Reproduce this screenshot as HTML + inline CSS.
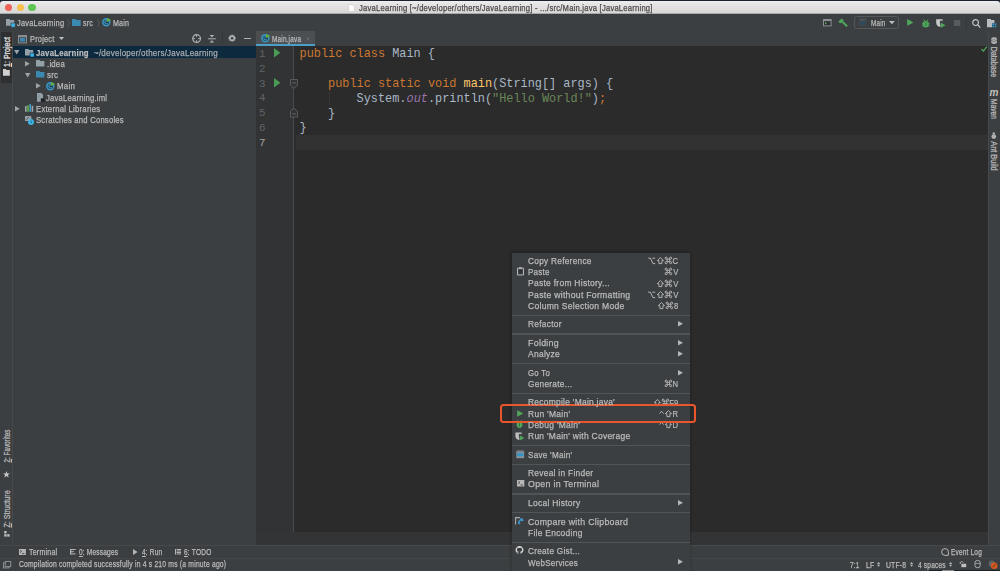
<!DOCTYPE html>
<html><head><meta charset="utf-8">
<style>
*{box-sizing:border-box;margin:0;padding:0}
html,body{width:1000px;height:571px;overflow:hidden;background:#3c3f41;font-family:"Liberation Sans",sans-serif;color:#bbbbbb;position:relative}
.a{position:absolute}
.t{position:absolute;white-space:pre;transform-origin:0 50%;font-family:"Liberation Sans",sans-serif;-webkit-text-stroke:0.25px currentColor}
.t u{text-decoration:underline;text-underline-offset:1px}
svg{position:absolute;overflow:visible}
.code{position:absolute;white-space:pre;font-family:"Liberation Mono",monospace;font-size:11.88px;line-height:14.85px;color:#a9b7c6}
.kw{color:#cc7832}.fn{color:#ffc66d}.st{color:#6a8759}.sf{color:#9876aa;font-style:italic}
.ln{position:absolute;font-family:"Liberation Mono",monospace;font-size:10.8px;line-height:14.85px;color:#676a6d}
</style></head><body>
<!-- window chrome -->
<div class="a" style="left:0;top:0;width:1000px;height:1.5px;background:#202430"></div>
<div class="a" style="left:0;top:0;width:1000px;height:4px;background:#1b2030"></div>
<div class="a" style="left:0;top:1.3px;width:1000px;height:12.7px;background:linear-gradient(#efefef,#e6e6e6 20%,#d6d6d6);border-radius:3px 3px 0 0"></div>
<div class="a" style="left:0;top:13px;width:1000px;height:1px;background:#a9a9a9"></div>
<div class="a" style="left:4.5px;top:3.9px;width:7.4px;height:7.4px;border-radius:50%;background:#ef6358"></div>
<div class="a" style="left:16.5px;top:3.9px;width:7.4px;height:7.4px;border-radius:50%;background:#f6bf4e"></div>
<div class="a" style="left:28.3px;top:3.9px;width:7.4px;height:7.4px;border-radius:50%;background:#5ec552"></div>
<svg style="left:348px;top:4px" width="7" height="8" viewBox="0 0 7 8"><path d="M0.5 0.5H4.5L6.5 2.5V7.5H0.5Z" fill="#fbfbfb" stroke="#c8c8c8" stroke-width="0.6"/></svg>

<!-- nav bar -->
<div class="a" style="left:0;top:14px;width:1000px;height:17px;background:#3c3f41"></div>
<div class="a" style="left:0;top:30.5px;width:1000px;height:1px;background:#303234"></div>

<!-- left stripe -->
<div class="a" style="left:0;top:31px;width:12px;height:514px;background:#3c3f41"></div>
<div class="a" style="left:1px;top:31.5px;width:10.5px;height:51.5px;background:#2d2f30"></div>
<div class="a" style="left:12px;top:31px;width:1px;height:514px;background:#46484a"></div>

<!-- project panel -->
<div class="a" style="left:13px;top:31px;width:243px;height:514px;background:#3c3f41"></div>
<div class="a" style="left:12.5px;top:46px;width:243.5px;height:11.8px;background:#0d293e"></div>

<!-- editor -->
<div class="a" style="left:256px;top:31px;width:732px;height:15px;background:#3c3f41"></div>
<div class="a" style="left:256px;top:31px;width:58.5px;height:15px;background:#4b4f52"></div>
<div class="a" style="left:256px;top:43.7px;width:58.5px;height:2.2px;background:#4a9fc8"></div>
<div class="a" style="left:256px;top:46px;width:732px;height:499px;background:#2b2b2b"></div>
<div class="a" style="left:256px;top:46px;width:37px;height:499px;background:#313335"></div>
<div class="a" style="left:293.2px;top:46px;width:1px;height:499px;background:#484a4c"></div>
<div class="a" style="left:295.5px;top:135px;width:692.5px;height:14.5px;background:#323232"></div>

<div class="a" style="left:256px;top:532px;width:732px;height:13px;background:#323436"></div>
<!-- right stripe -->
<div class="a" style="left:988px;top:31px;width:12px;height:514px;background:#3c3f41"></div>
<div class="a" style="left:987.6px;top:31px;width:1px;height:514px;background:#46494b"></div>


<!-- bottom stripe + status -->
<div class="a" style="left:0;top:545px;width:1000px;height:1px;background:#46484a"></div>
<div class="a" style="left:0;top:546px;width:1000px;height:12px;background:#3c3f41"></div>
<div class="a" style="left:0;top:558px;width:1000px;height:1px;background:#444648"></div>
<div class="a" style="left:0;top:559px;width:1000px;height:12px;background:#3c3f41"></div>

<!-- code -->
<div class="code" style="left:299.6px;top:47.2px"><span class="kw">public class </span>Main {

    <span class="kw">public static void </span><span class="fn">main</span>(String[] args) {
        System.<span class="sf">out</span>.println(<span class="st">"Hello World!"</span>)<span class="kw">;</span>
    }
}
</div>

<svg style="left:5.8px;top:19px" width="8.2" height="6.8" viewBox="0 0 8.2 6.8"><path d="M0 0H3.44L4.26 1.1H8.2 V6.8H0Z" fill="#93a0a8"/></svg>
<svg style="left:11px;top:23.4px" width="4.2" height="4.2" viewBox="0 0 4.2 4.2"><rect width="4.2" height="4.2" fill="#3cb4e6" stroke="#3c3f41" stroke-width="0.6"/></svg>
<svg style="left:66.8px;top:18.5px" width="3" height="8.5" viewBox="0 0 3 8.5"><path d="M0.5 0.3L2.5 4.25L0.5 8.2" fill="none" stroke="#5a5d5f" stroke-width="0.8"/></svg>
<svg style="left:72.3px;top:18.8px" width="8.7" height="6.9" viewBox="0 0 8.7 6.9"><path d="M0 0H3.65L4.52 1.1H8.7 V6.9H0Z" fill="#3a89b0"/></svg>
<svg style="left:96.5px;top:18.5px" width="3" height="8.5" viewBox="0 0 3 8.5"><path d="M0.5 0.3L2.5 4.25L0.5 8.2" fill="none" stroke="#5a5d5f" stroke-width="0.8"/></svg>
<svg style="left:102px;top:18.2px" width="9.6" height="8.6" viewBox="0 0 9.6 8.6"><circle cx="4.3" cy="4.3" r="4.20" fill="#3b93c0"/><circle cx="4.3" cy="4.3" r="2.60" fill="#24404f"/><path d="M5.60 3.20A1.6 1.6 0 1 0 5.60 5.40" fill="none" stroke="#3b93c0" stroke-width="1.1"/><path d="M4.99 0L9.30 1.89L4.99 3.96Z" fill="#62b543"/></svg>
<svg style="left:822.9px;top:18.9px" width="8.6" height="7.4" viewBox="0 0 8.6 7.4"><rect x="0.5" y="0.5" width="7.6" height="6.4" fill="#2f3133" stroke="#8c8f91" stroke-width="1"/><rect x="0.5" y="0.5" width="7.6" height="1.6" fill="#8c8f91"/><path d="M2 3L4 4.3L2 5.6Z" fill="#4fa85a"/></svg>
<svg style="left:838.1px;top:18.3px" width="9.2" height="8.2" viewBox="0 0 9.2 8.2"><path d="M3.2 2.8L8.6 7.8" stroke="#4fa85a" stroke-width="1.9" stroke-linecap="round"/><path d="M0.4 3.6L3.8 0.4L5.6 2.2L2.2 5.4Z" fill="#4fa85a"/></svg>
<div class="a" style="left:854px;top:16px;width:44.8px;height:13.2px;border:1px solid #55585a;border-radius:2.5px;background:#3c3f41"></div>
<svg style="left:859.4px;top:18.1px" width="7.6" height="7.8" viewBox="0 0 7.6 7.8"><rect x="0" y="0" width="7.6" height="7.8" fill="#45484b"/><rect x="0.8" y="1.2" width="6" height="1.2" fill="#55585b"/><rect x="0.8" y="3.4" width="6" height="3.4" fill="#2d4a5c"/></svg>
<svg style="left:889.3px;top:21.4px" width="5.8" height="3.2" viewBox="0 0 5.8 3.2"><path d="M0 0H5.8L2.9 3.2Z" fill="#c0c0c0"/></svg>
<svg style="left:907px;top:19.4px" width="6.6" height="6.8" viewBox="0 0 6.6 6.8"><path d="M0.2 0L6.4 3.4L0.2 6.8Z" fill="#4fa85a"/></svg>
<svg style="left:921.9px;top:18.5px" width="7.6" height="8.6" viewBox="0 0 7.6 8.6"><ellipse cx="3.8" cy="5.2" rx="3.1" ry="3.3" fill="#4fa85a"/><rect x="3.4" y="3.4" width="0.8" height="3.6" fill="#2f6b38"/><path d="M1.6 0.4L2.8 2.1M6 0.4L4.8 2.1M0 4.6H1M6.6 4.6H7.6M0 6.8H1M6.6 6.8H7.6" stroke="#4fa85a" stroke-width="0.9"/></svg>
<svg style="left:936.4px;top:18.5px" width="9.6" height="8.8" viewBox="0 0 9.6 8.8"><path d="M0.2 0.2H6.6V3.5Q6.6 6.8 3.4 7.8Q0.2 6.8 0.2 3.5Z" fill="#c9c9c9"/><path d="M3.9 1.8H6.8V5.6L4.7 7.4Q3.9 5.2 3.9 3.6Z" fill="#3c3f41"/><path d="M4.8 3.8L9.6 6.3L4.8 8.8Z" fill="#4fa85a"/></svg>
<svg style="left:953.5px;top:19.8px" width="6.3" height="6" viewBox="0 0 6.3 6"><rect width="6.3" height="6" fill="#595c5e"/></svg>
<div class="a" style="left:966px;top:16.5px;width:1px;height:12px;background:#333536"></div>
<svg style="left:971.8px;top:18.5px" width="8.6" height="9.2" viewBox="0 0 8.6 9.2"><circle cx="3.6" cy="3.6" r="2.9" fill="none" stroke="#c6c6c6" stroke-width="1.2"/><path d="M5.7 5.7L8.2 8.6" stroke="#c6c6c6" stroke-width="1.3"/></svg>
<svg style="left:987px;top:19.3px" width="9.4" height="8.4" viewBox="0 0 9.4 8.4"><path d="M0 0H3.6L4.4 1H7.4V4.2H5V8.2H0Z" fill="#b8bcbf"/><rect x="5.2" y="4.4" width="1.8" height="1.7" fill="#3592c4"/><rect x="7.5" y="4.4" width="1.8" height="1.7" fill="#3592c4"/><rect x="5.2" y="6.6" width="1.8" height="1.7" fill="#3592c4"/><rect x="7.5" y="6.6" width="1.8" height="1.7" fill="#3592c4"/></svg>
<svg style="left:2.9px;top:69px" width="6.8" height="6.8" viewBox="0 0 6.8 6.8"><path d="M0 0H2.8L3.4 1H6.8V6.8H0Z" fill="#d0d0d0"/></svg>
<svg style="left:3.2px;top:470.8px" width="7" height="6.6" viewBox="0 0 7 6.6"><path d="M3.5 0L4.35 2.45H7L4.9 4L5.7 6.6L3.5 5L1.3 6.6L2.1 4L0 2.45H2.65Z" fill="#c8c8c8"/></svg>
<svg style="left:3.8px;top:531.4px" width="5.6" height="5.8" viewBox="0 0 5.6 5.8"><rect x="0.2" y="0" width="2.4" height="2.4" fill="#c0c0c0"/><rect x="0.2" y="3.2" width="2.4" height="2.4" fill="#c0c0c0"/><rect x="3.2" y="3.2" width="2.4" height="2.4" fill="#c0c0c0"/></svg>
<svg style="left:18px;top:34.6px" width="9" height="8.4" viewBox="0 0 9 8.4"><rect x="0.5" y="0.5" width="8" height="7.4" fill="#3c3f41" stroke="#8a8e91" stroke-width="1"/><rect x="0.5" y="0.5" width="8" height="1.8" fill="#8a8e91"/><rect x="1.8" y="3" width="5.4" height="3.6" fill="#3b88b2"/></svg>
<svg style="left:58.8px;top:37.2px" width="5" height="3" viewBox="0 0 5 3"><path d="M0 0H5L2.5 3Z" fill="#c0c0c0"/></svg>
<svg style="left:191.9px;top:34px" width="9.2" height="9.2" viewBox="0 0 9.2 9.2"><circle cx="4.6" cy="4.6" r="3.9" fill="none" stroke="#afb1b3" stroke-width="1.2"/><path d="M4.6 1V3M4.6 6.2V8.2M1 4.6H3M6.2 4.6H8.2" stroke="#afb1b3" stroke-width="1"/></svg>
<svg style="left:208.1px;top:34.8px" width="7.8" height="7.6" viewBox="0 0 7.8 7.6"><path d="M1.6 0H6.2L3.9 2.4Z" fill="#afb1b3"/><rect x="0" y="3.3" width="7.8" height="1" fill="#afb1b3"/><path d="M1.6 7.6H6.2L3.9 5.2Z" fill="#afb1b3"/></svg>
<div class="a" style="left:221.6px;top:33px;width:1px;height:11px;background:#333536"></div>
<svg style="left:227.5px;top:34.4px" width="8.2" height="8.4" viewBox="0 0 8.2 8.4"><path d="M4.1 0.2L5 1.6L6.6 1.5L6.9 3.1L8.2 4.2L6.9 5.3L6.6 6.9L5 6.8L4.1 8.2L3.2 6.8L1.6 6.9L1.3 5.3L0 4.2L1.3 3.1L1.6 1.5L3.2 1.6Z" fill="#afb1b3"/><circle cx="4.1" cy="4.2" r="1.3" fill="#3c3f41"/></svg>
<div class="a" style="left:243.6px;top:38px;width:7.2px;height:1.1px;background:#afb1b3"></div>
<svg style="left:14.4px;top:50px" width="5.4" height="4.6" viewBox="0 0 5.4 4.6"><path d="M0 0H5.4L2.7 4.6Z" fill="#a0a2a4"/></svg>
<svg style="left:24.9px;top:48.8px" width="8.2" height="6.6" viewBox="0 0 8.2 6.6"><path d="M0 0H3.44L4.26 1.1H8.2 V6.6H0Z" fill="#93a0a8"/></svg>
<svg style="left:30.1px;top:53.2px" width="4.2" height="4" viewBox="0 0 4.2 4"><rect width="4.2" height="4" fill="#3cb4e6" stroke="#0d293e" stroke-width="0.6"/></svg>
<svg style="left:25.3px;top:60.9px" width="4.8" height="5.4" viewBox="0 0 4.8 5.4"><path d="M0 0L4.8 2.7L0 5.4Z" fill="#a0a2a4"/></svg>
<svg style="left:35.8px;top:60.1px" width="8.4" height="6.4" viewBox="0 0 8.4 6.4"><path d="M0 0H3.53L4.37 1.1H8.4 V6.4H0Z" fill="#93a0a8"/></svg>
<svg style="left:25.1px;top:72.6px" width="5.4" height="4.6" viewBox="0 0 5.4 4.6"><path d="M0 0H5.4L2.7 4.6Z" fill="#a0a2a4"/></svg>
<svg style="left:35.8px;top:71.4px" width="8.4" height="6.4" viewBox="0 0 8.4 6.4"><path d="M0 0H3.53L4.37 1.1H8.4 V6.4H0Z" fill="#3a89b0"/></svg>
<svg style="left:36.2px;top:83.4px" width="4.8" height="5.4" viewBox="0 0 4.8 5.4"><path d="M0 0L4.8 2.7L0 5.4Z" fill="#a0a2a4"/></svg>
<svg style="left:46.3px;top:81.8px" width="9.6" height="8.6" viewBox="0 0 9.6 8.6"><circle cx="4.3" cy="4.3" r="4.20" fill="#3b93c0"/><circle cx="4.3" cy="4.3" r="2.60" fill="#24404f"/><path d="M5.60 3.20A1.6 1.6 0 1 0 5.60 5.40" fill="none" stroke="#3b93c0" stroke-width="1.1"/><path d="M4.99 0L9.30 1.89L4.99 3.96Z" fill="#62b543"/></svg>
<svg style="left:37px;top:93.2px" width="7.6" height="9" viewBox="0 0 7.6 9"><path d="M0 0H4.2L6 1.8V8.8H0Z" fill="#93a0a8"/><path d="M2 2.2V4" stroke="#6e7a82" stroke-width="0.6"/><rect x="4" y="5.6" width="3.6" height="3.4" fill="#1c1c1c" stroke="#3c3f41" stroke-width="0.5"/></svg>
<svg style="left:15px;top:106.3px" width="4.8" height="5.4" viewBox="0 0 4.8 5.4"><path d="M0 0L4.8 2.7L0 5.4Z" fill="#a0a2a4"/></svg>
<svg style="left:25px;top:104.3px" width="8.6" height="7.8" viewBox="0 0 8.6 7.8"><rect x="0" y="2" width="1.6" height="5.8" fill="#9aa7b0"/><rect x="2.2" y="1.2" width="1.6" height="6.6" fill="#62b543"/><rect x="4.4" y="0" width="1.6" height="7.8" fill="#3d9ac9"/><rect x="6.6" y="1.8" width="1.6" height="6" fill="#9aa7b0"/></svg>
<svg style="left:25px;top:116px" width="9.2" height="9.2" viewBox="0 0 9.2 9.2"><path d="M0 0H5.6L6.4 0.8V5H0Z" fill="#93a0a8"/><path d="M1 4L4 1" stroke="#3c3f41" stroke-width="0.6"/><circle cx="6" cy="6" r="3" fill="#3cb4e6"/><path d="M6 4.6V6.2L7 7" stroke="#1b4f66" stroke-width="0.7" fill="none"/></svg>
<svg style="left:261.4px;top:34.4px" width="9.6" height="8.6" viewBox="0 0 9.6 8.6"><circle cx="4.3" cy="4.3" r="4.20" fill="#3b93c0"/><circle cx="4.3" cy="4.3" r="2.60" fill="#24404f"/><path d="M5.60 3.20A1.6 1.6 0 1 0 5.60 5.40" fill="none" stroke="#3b93c0" stroke-width="1.1"/><path d="M4.99 0L9.30 1.89L4.99 3.96Z" fill="#62b543"/></svg>
<svg style="left:305.8px;top:37px" width="3.9" height="3.9" viewBox="0 0 3.9 3.9"><path d="M0.2 0.2L3.7 3.7M3.7 0.2L0.2 3.7" stroke="#6d7072" stroke-width="0.8"/></svg>
<div class="ln" style="left:259px;top:47.00px;color:#606366">1</div>
<div class="ln" style="left:259px;top:61.83px;color:#606366">2</div>
<div class="ln" style="left:259px;top:76.66px;color:#606366">3</div>
<div class="ln" style="left:259px;top:91.49px;color:#606366">4</div>
<div class="ln" style="left:259px;top:106.32px;color:#606366">5</div>
<div class="ln" style="left:259px;top:121.15px;color:#606366">6</div>
<div class="ln" style="left:259px;top:135.98px;color:#a4a3a3">7</div>
<svg style="left:273.7px;top:48.400000000000006px" width="6.4" height="9.6" viewBox="0 0 6.4 9.6"><path d="M0 0L6.4 4.8L0 9.6Z" fill="#499c54"/></svg>
<svg style="left:273.7px;top:78.2px" width="6.4" height="9.6" viewBox="0 0 6.4 9.6"><path d="M0 0L6.4 4.8L0 9.6Z" fill="#499c54"/></svg>
<svg style="left:289.9px;top:79.4px" width="8" height="9.8" viewBox="0 0 8 9.8"><path d="M0.5 0.5H7.5V6.4L4 9.3L0.5 6.4Z" fill="#313335" stroke="#595b5d" stroke-width="1"/><path d="M2.3 3.9H5.7" stroke="#6e7072" stroke-width="0.9"/></svg>
<svg style="left:289.9px;top:108.4px" width="8" height="9.6" viewBox="0 0 8 9.6"><path d="M0.5 9.1H7.5V3.2L4 0.3L0.5 3.2Z" fill="#313335" stroke="#595b5d" stroke-width="1"/><path d="M2.3 5.9H5.7" stroke="#6e7072" stroke-width="0.9"/></svg>
<div class="a" style="left:328.6px;top:91px;width:1px;height:14px;background:#373737"></div>
<svg style="left:980.6px;top:46.4px" width="6.2" height="5.8" viewBox="0 0 6.2 5.8"><path d="M0.5 3L2.4 5L5.8 0.6" fill="none" stroke="#4fa85a" stroke-width="1.2"/></svg>
<svg style="left:990.8px;top:37.2px" width="6.2" height="7.4" viewBox="0 0 6.2 7.4"><ellipse cx="3.1" cy="1.3" rx="2.8" ry="1.1" fill="#b0b0b0"/><path d="M0.3 1.6V6.1Q3.1 7.8 5.9 6.1V1.6Q3.1 3.3 0.3 1.6Z" fill="#b0b0b0"/><path d="M0.3 3.6Q3.1 5.3 5.9 3.6" stroke="#3c3f41" stroke-width="0.5" fill="none"/></svg>
<div class="t" style="left:989.5px;top:88.5px;font:italic bold 10px 'Liberation Sans',sans-serif;color:#c0c0c0;line-height:8px;-webkit-text-stroke:0">m</div>
<svg style="left:991.2px;top:131.6px" width="5.6" height="7" viewBox="0 0 5.6 7"><ellipse cx="2.8" cy="4.6" rx="2.4" ry="2.4" fill="#b0b0b0"/><circle cx="2.8" cy="1.4" r="1.2" fill="#b0b0b0"/></svg>
<svg style="left:18.9px;top:548.9px" width="6.9" height="6" viewBox="0 0 6.9 6"><rect width="6.9" height="6" fill="#b5b5b5"/><path d="M1 1.2L2.6 2.4L1 3.6M3 4.6H5.4" stroke="#3c3f41" stroke-width="0.8" fill="none"/></svg>
<svg style="left:70px;top:549.4px" width="5.6" height="5.4" viewBox="0 0 5.6 5.4"><rect x="0" y="0" width="5.6" height="1" fill="#b5b5b5"/><rect x="0" y="2.2" width="4" height="1" fill="#b5b5b5"/><rect x="0" y="4.4" width="5.6" height="1" fill="#b5b5b5"/><rect x="0" y="0" width="1.2" height="5.4" fill="#b5b5b5"/></svg>
<svg style="left:132.6px;top:549.2px" width="4.6" height="6" viewBox="0 0 4.6 6"><path d="M0 0L4.6 3L0 6Z" fill="#b5b5b5"/></svg>
<svg style="left:174.7px;top:549.4px" width="6" height="5.6" viewBox="0 0 6 5.6"><rect x="0" y="0" width="1" height="5.6" fill="#b5b5b5"/><rect x="1.6" y="0" width="4.4" height="1" fill="#b5b5b5"/><rect x="1.6" y="1.5" width="4.4" height="1" fill="#b5b5b5"/><rect x="1.6" y="3" width="4.4" height="1" fill="#b5b5b5"/><rect x="1.6" y="4.5" width="4.4" height="1" fill="#b5b5b5"/></svg>
<svg style="left:941.2px;top:547.9px" width="8" height="8.2" viewBox="0 0 8 8.2"><path d="M4 0.6A3.4 3.4 0 1 0 4 7.4H7.4V4A3.4 3.4 0 0 0 4 0.6Z" fill="none" stroke="#b5b5b5" stroke-width="1"/></svg>
<svg style="left:3px;top:560.9px" width="8.2" height="7.4" viewBox="0 0 8.2 7.4"><rect x="0.5" y="1.8" width="5.4" height="5.1" fill="#3c3f41" stroke="#8d9093" stroke-width="1"/><rect x="2.3" y="0.5" width="5.4" height="5.1" fill="#3c3f41" stroke="#8d9093" stroke-width="1"/></svg>
<svg style="left:877.3px;top:562px" width="3.2" height="4.8" viewBox="0 0 3.2 4.8"><path d="M0 2L1.6 0L3.2 2ZM0 2.8H3.2L1.6 4.8Z" fill="#b8babc"/></svg>
<svg style="left:910.1px;top:562px" width="3.2" height="4.8" viewBox="0 0 3.2 4.8"><path d="M0 2L1.6 0L3.2 2ZM0 2.8H3.2L1.6 4.8Z" fill="#b8babc"/></svg>
<svg style="left:949.3px;top:562px" width="3.2" height="4.8" viewBox="0 0 3.2 4.8"><path d="M0 2L1.6 0L3.2 2ZM0 2.8H3.2L1.6 4.8Z" fill="#b8babc"/></svg>
<svg style="left:959px;top:561px" width="7.2" height="6.2" viewBox="0 0 7.2 6.2"><path d="M1.2 3V1.8A1.6 1.6 0 0 1 4.2 1.6" fill="none" stroke="#c0c0c0" stroke-width="0.9"/><rect x="2.4" y="2.8" width="4.8" height="3.4" fill="#c0c0c0"/></svg>
<svg style="left:974.3px;top:560.3px" width="7.2" height="8.1" viewBox="0 0 7.2 8.1"><path d="M1 2.6Q1 0.4 3.6 0.4Q6.2 0.4 6.2 2.6V5.4Q6.2 7.8 3.6 7.8Q1 7.8 1 5.4Z" fill="none" stroke="#a9acae" stroke-width="1"/><path d="M1 3.4H6.2" stroke="#a9acae" stroke-width="0.8"/></svg>
<svg style="left:987.6px;top:560.2px" width="10" height="9" viewBox="0 0 10 9"><circle cx="3.8" cy="3.8" r="3.2" fill="#5d6366"/><circle cx="6.2" cy="5.7" r="3.3" fill="#d9581c"/><path d="M4.5 7.3L7.9 4.1" stroke="#3c3f41" stroke-width="0.9"/></svg>
<div class="a" style="left:929px;top:570px;width:71px;height:1px;background:#1f2022"></div>
<div class="a" style="left:941.5px;top:570px;width:12.4px;height:1px;background:#8a8a8a"></div>
<div class="a" style="left:510.2px;top:251.4px;width:181px;height:330px;background:rgba(0,0,0,0.14);border-radius:2px;filter:blur(1px)"></div>
<div class="a" style="left:511.6px;top:253px;width:178px;height:330px;background:#3c3f41"></div>
<div class="a" style="right:321.60px;top:255.11px;height:11px;line-height:11px;font-size:9.6px;color:#bbb;white-space:nowrap;-webkit-text-stroke:0.2px #bbb;display:flex;align-items:flex-start"><svg style="position:relative;display:inline-block;vertical-align:top;margin-top:2px;margin-right:1.50px" width="7.3" height="7" viewBox="0 0 7.3 7"><path d="M0.2 1.2H2.4L5 6.6H7.2M4.4 1.2H7.2" fill="none" stroke="#bbb" stroke-width="0.95"/></svg><svg style="position:relative;display:inline-block;vertical-align:top;margin-top:2px;margin-right:1.30px" width="6.8" height="7" viewBox="0 0 6.8 7"><path d="M3.4 0.5L6.5 3.7H4.9V6.6H1.9V3.7H0.3Z" fill="none" stroke="#bbb" stroke-width="0.9" stroke-linejoin="round"/></svg><svg style="position:relative;display:inline-block;vertical-align:top;margin-top:2px;margin-right:1.30px" width="6.8" height="7" viewBox="0 0 6.8 7"><path d="M2.2 2.2H4.6V4.6H2.2ZM2.2 2.2V1.2A1.05 1.05 0 1 0 1.2 2.2H2.2M4.6 2.2V1.2A1.05 1.05 0 1 1 5.6 2.2H4.6M4.6 4.6V5.6A1.05 1.05 0 1 0 5.6 4.6H4.6M2.2 4.6V5.6A1.05 1.05 0 1 1 1.2 4.6H2.2" fill="none" stroke="#bbb" stroke-width="0.9"/></svg><span style="display:inline-block;vertical-align:top;transform:scaleX(0.8);transform-origin:100% 50%;margin-left:-1.30px">C</span></div>
<div class="a" style="right:321.60px;top:266.33px;height:11px;line-height:11px;font-size:9.6px;color:#bbb;white-space:nowrap;-webkit-text-stroke:0.2px #bbb;display:flex;align-items:flex-start"><svg style="position:relative;display:inline-block;vertical-align:top;margin-top:2px;margin-right:1.30px" width="6.8" height="7" viewBox="0 0 6.8 7"><path d="M2.2 2.2H4.6V4.6H2.2ZM2.2 2.2V1.2A1.05 1.05 0 1 0 1.2 2.2H2.2M4.6 2.2V1.2A1.05 1.05 0 1 1 5.6 2.2H4.6M4.6 4.6V5.6A1.05 1.05 0 1 0 5.6 4.6H4.6M2.2 4.6V5.6A1.05 1.05 0 1 1 1.2 4.6H2.2" fill="none" stroke="#bbb" stroke-width="0.9"/></svg><span style="display:inline-block;vertical-align:top;transform:scaleX(0.8);transform-origin:100% 50%;margin-left:-1.30px">V</span></div>
<svg style="left:516.5px;top:266.80px" width="7" height="8.5" viewBox="0 0 7 8.5"><path d="M0.5 1.2H6.5V8H0.5Z" fill="#43474a" stroke="#b3b3b3" stroke-width="1"/><rect x="2" y="0.2" width="3" height="1.6" fill="#b3b3b3"/><rect x="1.8" y="3" width="3.4" height="3.4" fill="#2f3133"/></svg>
<div class="a" style="right:321.60px;top:277.55px;height:11px;line-height:11px;font-size:9.6px;color:#bbb;white-space:nowrap;-webkit-text-stroke:0.2px #bbb;display:flex;align-items:flex-start"><svg style="position:relative;display:inline-block;vertical-align:top;margin-top:2px;margin-right:1.30px" width="6.8" height="7" viewBox="0 0 6.8 7"><path d="M3.4 0.5L6.5 3.7H4.9V6.6H1.9V3.7H0.3Z" fill="none" stroke="#bbb" stroke-width="0.9" stroke-linejoin="round"/></svg><svg style="position:relative;display:inline-block;vertical-align:top;margin-top:2px;margin-right:1.30px" width="6.8" height="7" viewBox="0 0 6.8 7"><path d="M2.2 2.2H4.6V4.6H2.2ZM2.2 2.2V1.2A1.05 1.05 0 1 0 1.2 2.2H2.2M4.6 2.2V1.2A1.05 1.05 0 1 1 5.6 2.2H4.6M4.6 4.6V5.6A1.05 1.05 0 1 0 5.6 4.6H4.6M2.2 4.6V5.6A1.05 1.05 0 1 1 1.2 4.6H2.2" fill="none" stroke="#bbb" stroke-width="0.9"/></svg><span style="display:inline-block;vertical-align:top;transform:scaleX(0.8);transform-origin:100% 50%;margin-left:-1.30px">V</span></div>
<div class="a" style="right:321.60px;top:288.77px;height:11px;line-height:11px;font-size:9.6px;color:#bbb;white-space:nowrap;-webkit-text-stroke:0.2px #bbb;display:flex;align-items:flex-start"><svg style="position:relative;display:inline-block;vertical-align:top;margin-top:2px;margin-right:1.50px" width="7.3" height="7" viewBox="0 0 7.3 7"><path d="M0.2 1.2H2.4L5 6.6H7.2M4.4 1.2H7.2" fill="none" stroke="#bbb" stroke-width="0.95"/></svg><svg style="position:relative;display:inline-block;vertical-align:top;margin-top:2px;margin-right:1.30px" width="6.8" height="7" viewBox="0 0 6.8 7"><path d="M3.4 0.5L6.5 3.7H4.9V6.6H1.9V3.7H0.3Z" fill="none" stroke="#bbb" stroke-width="0.9" stroke-linejoin="round"/></svg><svg style="position:relative;display:inline-block;vertical-align:top;margin-top:2px;margin-right:1.30px" width="6.8" height="7" viewBox="0 0 6.8 7"><path d="M2.2 2.2H4.6V4.6H2.2ZM2.2 2.2V1.2A1.05 1.05 0 1 0 1.2 2.2H2.2M4.6 2.2V1.2A1.05 1.05 0 1 1 5.6 2.2H4.6M4.6 4.6V5.6A1.05 1.05 0 1 0 5.6 4.6H4.6M2.2 4.6V5.6A1.05 1.05 0 1 1 1.2 4.6H2.2" fill="none" stroke="#bbb" stroke-width="0.9"/></svg><span style="display:inline-block;vertical-align:top;transform:scaleX(0.8);transform-origin:100% 50%;margin-left:-1.30px">V</span></div>
<div class="a" style="right:321.60px;top:299.99px;height:11px;line-height:11px;font-size:9.6px;color:#bbb;white-space:nowrap;-webkit-text-stroke:0.2px #bbb;display:flex;align-items:flex-start"><svg style="position:relative;display:inline-block;vertical-align:top;margin-top:2px;margin-right:1.30px" width="6.8" height="7" viewBox="0 0 6.8 7"><path d="M3.4 0.5L6.5 3.7H4.9V6.6H1.9V3.7H0.3Z" fill="none" stroke="#bbb" stroke-width="0.9" stroke-linejoin="round"/></svg><svg style="position:relative;display:inline-block;vertical-align:top;margin-top:2px;margin-right:1.30px" width="6.8" height="7" viewBox="0 0 6.8 7"><path d="M2.2 2.2H4.6V4.6H2.2ZM2.2 2.2V1.2A1.05 1.05 0 1 0 1.2 2.2H2.2M4.6 2.2V1.2A1.05 1.05 0 1 1 5.6 2.2H4.6M4.6 4.6V5.6A1.05 1.05 0 1 0 5.6 4.6H4.6M2.2 4.6V5.6A1.05 1.05 0 1 1 1.2 4.6H2.2" fill="none" stroke="#bbb" stroke-width="0.9"/></svg><span style="display:inline-block;vertical-align:top;transform:scaleX(0.8);transform-origin:100% 50%;margin-left:-1.30px">8</span></div>
<div class="a" style="left:511.6px;top:314.91px;width:178px;height:1.2px;background:#525557"></div>
<svg style="left:678.2px;top:321.23px" width="5" height="5.6" viewBox="0 0 5 5.6"><path d="M0 0L5 2.8L0 5.6Z" fill="#b4b6b8"/></svg>
<div class="a" style="left:511.6px;top:333.45px;width:178px;height:1.2px;background:#525557"></div>
<svg style="left:678.2px;top:339.77px" width="5" height="5.6" viewBox="0 0 5 5.6"><path d="M0 0L5 2.8L0 5.6Z" fill="#b4b6b8"/></svg>
<svg style="left:678.2px;top:350.99px" width="5" height="5.6" viewBox="0 0 5 5.6"><path d="M0 0L5 2.8L0 5.6Z" fill="#b4b6b8"/></svg>
<div class="a" style="left:511.6px;top:363.21px;width:178px;height:1.2px;background:#525557"></div>
<svg style="left:678.2px;top:369.53px" width="5" height="5.6" viewBox="0 0 5 5.6"><path d="M0 0L5 2.8L0 5.6Z" fill="#b4b6b8"/></svg>
<div class="a" style="right:321.60px;top:378.05px;height:11px;line-height:11px;font-size:9.6px;color:#bbb;white-space:nowrap;-webkit-text-stroke:0.2px #bbb;display:flex;align-items:flex-start"><svg style="position:relative;display:inline-block;vertical-align:top;margin-top:2px;margin-right:1.30px" width="6.8" height="7" viewBox="0 0 6.8 7"><path d="M2.2 2.2H4.6V4.6H2.2ZM2.2 2.2V1.2A1.05 1.05 0 1 0 1.2 2.2H2.2M4.6 2.2V1.2A1.05 1.05 0 1 1 5.6 2.2H4.6M4.6 4.6V5.6A1.05 1.05 0 1 0 5.6 4.6H4.6M2.2 4.6V5.6A1.05 1.05 0 1 1 1.2 4.6H2.2" fill="none" stroke="#bbb" stroke-width="0.9"/></svg><span style="display:inline-block;vertical-align:top;transform:scaleX(0.8);transform-origin:100% 50%;margin-left:-1.30px">N</span></div>
<div class="a" style="left:511.6px;top:392.97px;width:178px;height:1.2px;background:#525557"></div>
<div class="a" style="right:321.60px;top:396.59px;height:11px;line-height:11px;font-size:9.6px;color:#bbb;white-space:nowrap;-webkit-text-stroke:0.2px #bbb;display:flex;align-items:flex-start"><svg style="position:relative;display:inline-block;vertical-align:top;margin-top:2px;margin-right:1.30px" width="6.8" height="7" viewBox="0 0 6.8 7"><path d="M3.4 0.5L6.5 3.7H4.9V6.6H1.9V3.7H0.3Z" fill="none" stroke="#bbb" stroke-width="0.9" stroke-linejoin="round"/></svg><svg style="position:relative;display:inline-block;vertical-align:top;margin-top:2px;margin-right:1.30px" width="6.8" height="7" viewBox="0 0 6.8 7"><path d="M2.2 2.2H4.6V4.6H2.2ZM2.2 2.2V1.2A1.05 1.05 0 1 0 1.2 2.2H2.2M4.6 2.2V1.2A1.05 1.05 0 1 1 5.6 2.2H4.6M4.6 4.6V5.6A1.05 1.05 0 1 0 5.6 4.6H4.6M2.2 4.6V5.6A1.05 1.05 0 1 1 1.2 4.6H2.2" fill="none" stroke="#bbb" stroke-width="0.9"/></svg><span style="display:inline-block;vertical-align:top;transform:scaleX(0.8);transform-origin:100% 50%;margin-left:-2.60px">F9</span></div>
<div class="a" style="right:321.60px;top:407.81px;height:11px;line-height:11px;font-size:9.6px;color:#bbb;white-space:nowrap;-webkit-text-stroke:0.2px #bbb;display:flex;align-items:flex-start"><svg style="position:relative;display:inline-block;vertical-align:top;margin-top:2px;margin-right:0.80px" width="5.2" height="7" viewBox="0 0 5.2 7"><path d="M0.6 3.6L2.6 1.2L4.6 3.6" fill="none" stroke="#bbb" stroke-width="0.9"/></svg><svg style="position:relative;display:inline-block;vertical-align:top;margin-top:2px;margin-right:1.30px" width="6.8" height="7" viewBox="0 0 6.8 7"><path d="M3.4 0.5L6.5 3.7H4.9V6.6H1.9V3.7H0.3Z" fill="none" stroke="#bbb" stroke-width="0.9" stroke-linejoin="round"/></svg><span style="display:inline-block;vertical-align:top;transform:scaleX(0.8);transform-origin:100% 50%;margin-left:-1.30px">R</span></div>
<svg style="left:517px;top:409.50px" width="6.5" height="7" viewBox="0 0 6.5 7"><path d="M0.2 0.2L6.2 3.5L0.2 6.8Z" fill="#4fa85a"/></svg>
<div class="a" style="right:321.60px;top:419.03px;height:11px;line-height:11px;font-size:9.6px;color:#bbb;white-space:nowrap;-webkit-text-stroke:0.2px #bbb;display:flex;align-items:flex-start"><svg style="position:relative;display:inline-block;vertical-align:top;margin-top:2px;margin-right:0.80px" width="5.2" height="7" viewBox="0 0 5.2 7"><path d="M0.6 3.6L2.6 1.2L4.6 3.6" fill="none" stroke="#bbb" stroke-width="0.9"/></svg><svg style="position:relative;display:inline-block;vertical-align:top;margin-top:2px;margin-right:1.30px" width="6.8" height="7" viewBox="0 0 6.8 7"><path d="M3.4 0.5L6.5 3.7H4.9V6.6H1.9V3.7H0.3Z" fill="none" stroke="#bbb" stroke-width="0.9" stroke-linejoin="round"/></svg><span style="display:inline-block;vertical-align:top;transform:scaleX(0.8);transform-origin:100% 50%;margin-left:-1.30px">D</span></div>
<svg style="left:516.3px;top:420.30px" width="7" height="8" viewBox="0 0 7 8"><ellipse cx="3.5" cy="4.8" rx="2.9" ry="3.1" fill="#4fa85a"/><rect x="3.1" y="3.2" width="0.8" height="3.4" fill="#2f6b38"/><path d="M1.5 0.3L2.5 1.8M5.5 0.3L4.5 1.8" stroke="#4fa85a" stroke-width="0.9"/></svg>

<svg style="left:515.3px;top:431.60px" width="10" height="9" viewBox="0 0 10 9"><path d="M0.4 0.6H6.6V3.8Q6.6 7 3.5 8Q0.4 7 0.4 3.8Z" fill="#bdbdbd"/><path d="M3.9 2.1H6.8V5.8L4.7 7.6Q3.9 5.4 3.9 3.9Z" fill="#3c3f41"/><path d="M4.8 3.6L9.4 6.1L4.8 8.6Z" fill="#4fa85a"/></svg>
<div class="a" style="left:511.6px;top:445.17px;width:178px;height:1.2px;background:#525557"></div>

<svg style="left:515.7px;top:449.60px" width="8.5" height="8.5" viewBox="0 0 8.5 8.5"><path d="M0.3 1.2H8.2V8.2H0.3Z" fill="#8a9399"/><rect x="1" y="0.2" width="6.5" height="1.2" fill="#6f787e"/><rect x="1" y="3.2" width="6.5" height="3" fill="#3592c4"/></svg>
<div class="a" style="left:511.6px;top:463.71px;width:178px;height:1.2px;background:#525557"></div>


<svg style="left:516.6px;top:480.30px" width="7.3" height="6.5" viewBox="0 0 7.3 6.5"><rect x="0" y="0" width="7.3" height="6.5" fill="#b8b8b8"/><path d="M1.3 1.3L3 2.6L1.3 3.9M3.4 5H6" stroke="#3c3f41" stroke-width="0.8" fill="none"/></svg>
<div class="a" style="left:511.6px;top:493.47px;width:178px;height:1.2px;background:#525557"></div>
<svg style="left:678.2px;top:499.79px" width="5" height="5.6" viewBox="0 0 5 5.6"><path d="M0 0L5 2.8L0 5.6Z" fill="#b4b6b8"/></svg>
<div class="a" style="left:511.6px;top:512.01px;width:178px;height:1.2px;background:#525557"></div>

<svg style="left:515.4px;top:517.10px" width="10" height="8" viewBox="0 0 10 8"><path d="M0.6 7.5V0.6H5" fill="none" stroke="#aaaaaa" stroke-width="1.1"/><path d="M3.2 5.2L6.5 2M5.2 2H6.9V3.7" stroke="#3e96d0" stroke-width="1.4" fill="none"/><path d="M2.8 6.2L4.2 7.6L5.6 6.2L4.2 4.8Z" fill="#3e96d0"/><path d="M7.4 1.8L8.8 3.2L7.4 4.6L6 3.2Z" fill="#3e96d0"/></svg>

<div class="a" style="left:511.6px;top:541.77px;width:178px;height:1.2px;background:#525557"></div>

<svg style="left:515.4px;top:546.30px" width="9" height="8" viewBox="0 0 16 16"><path fill="#d4d4d4" d="M8 0C3.58 0 0 3.58 0 8c0 3.54 2.29 6.53 5.47 7.59.4.07.55-.17.55-.38 0-.19-.01-.82-.01-1.49-2.01.37-2.53-.49-2.69-.94-.09-.23-.48-.94-.82-1.13-.28-.15-.68-.52-.01-.53.63-.01 1.08.58 1.23.82.72 1.21 1.87.87 2.33.66.07-.52.28-.87.51-1.07-1.78-.2-3.640-.89-3.64-3.95 0-.87.31-1.59.82-2.15-.08-.2-.36-1.02.08-2.12 0 0 .67-.21 2.2.82.64-.18 1.32-.27 2-.27.68 0 1.36.09 2 .27 1.53-1.04 2.200-.82 2.2-.82.44 1.1.16 1.92.08 2.12.51.56.82 1.27.82 2.15 0 3.07-1.87 3.750-3.65 3.95.29.25.54.73.54 1.48 0 1.07-.01 1.93-.01 2.2 0 .21.15.46.55.38A8.013 8.013 0 0016 8c0-4.42-3.58-8-8-8z"/></svg>
<svg style="left:678.2px;top:559.31px" width="5" height="5.6" viewBox="0 0 5 5.6"><path d="M0 0L5 2.8L0 5.6Z" fill="#b4b6b8"/></svg>
<div class="a" style="left:499.6px;top:404.3px;width:196.2px;height:19.2px;border:2.1px solid #e9562b;border-radius:3.5px"></div>
<div id="t0" class="t" style="left:359.00px;top:1.80px;height:12px;line-height:12px;font-size:8.6px;color:#4a4a4a;transform:scaleX(0.8872);letter-spacing:0.25px;">JavaLearning [~/developer/others/JavaLearning] - .../src/Main.java [JavaLearning]</div>
<div id="t1" class="t" style="left:16.80px;top:16.50px;height:12px;line-height:12px;font-size:9px;color:#bbbbbb;transform:scaleX(0.8283);letter-spacing:0.25px;">JavaLearning</div>
<div id="t2" class="t" style="left:83.30px;top:16.50px;height:12px;line-height:12px;font-size:9px;color:#bbbbbb;transform:scaleX(0.7804);letter-spacing:0.25px;">src</div>
<div id="t3" class="t" style="left:112.70px;top:16.50px;height:12px;line-height:12px;font-size:9px;color:#bbbbbb;transform:scaleX(0.7872);letter-spacing:0.25px;">Main</div>
<div id="t4" class="t" style="left:870.50px;top:16.50px;height:12px;line-height:12px;font-size:9px;color:#bbbbbb;transform:scaleX(0.7043);letter-spacing:0.25px;">Main</div>
<div id="t5" class="t" style="left:29.70px;top:32.80px;height:12px;line-height:12px;font-size:9px;color:#bbbbbb;transform:scaleX(0.8248);letter-spacing:0.25px;">Project</div>
<div id="t6" class="t" style="left:36.00px;top:46.50px;height:12px;line-height:12px;font-size:9px;color:#bbbbbb;transform:scaleX(0.8659);letter-spacing:0.25px;"><b>JavaLearning</b></div>
<div id="t7" class="t" style="left:93.80px;top:46.50px;height:12px;line-height:12px;font-size:9px;color:#a9acaf;transform:scaleX(0.8911);letter-spacing:0.25px;">~/developer/others/JavaLearning</div>
<div id="t8" class="t" style="left:46.60px;top:57.90px;height:12px;line-height:12px;font-size:9px;color:#bbbbbb;transform:scaleX(0.8638);letter-spacing:0.25px;">.idea</div>
<div id="t9" class="t" style="left:46.60px;top:69.10px;height:12px;line-height:12px;font-size:9px;color:#bbbbbb;transform:scaleX(0.8745);letter-spacing:0.25px;">src</div>
<div id="t10" class="t" style="left:57.00px;top:80.30px;height:12px;line-height:12px;font-size:9px;color:#bbbbbb;transform:scaleX(0.8798);letter-spacing:0.25px;">Main</div>
<div id="t11" class="t" style="left:46.00px;top:91.50px;height:12px;line-height:12px;font-size:9px;color:#bbbbbb;transform:scaleX(0.8501);letter-spacing:0.25px;">JavaLearning.iml</div>
<div id="t12" class="t" style="left:36.00px;top:102.80px;height:12px;line-height:12px;font-size:9px;color:#bbbbbb;transform:scaleX(0.8621);letter-spacing:0.25px;">External Libraries</div>
<div id="t13" class="t" style="left:36.00px;top:114.00px;height:12px;line-height:12px;font-size:9px;color:#bbbbbb;transform:scaleX(0.8524);letter-spacing:0.25px;">Scratches and Consoles</div>
<div id="t14" class="t" style="left:272.20px;top:32.90px;height:12px;line-height:12px;font-size:8.5px;color:#bbbbbb;transform:scaleX(0.7544);letter-spacing:0.25px;">Main.java</div>
<div id="t15" class="t" style="left:28.60px;top:546.40px;height:12px;line-height:12px;font-size:8.4px;color:#bbbbbb;transform:scaleX(0.8423);letter-spacing:0.25px;">Terminal</div>
<div id="t16" class="t" style="left:79.30px;top:546.40px;height:12px;line-height:12px;font-size:8.4px;color:#bbbbbb;transform:scaleX(0.7811);letter-spacing:0.25px;"><u>0</u>: Messages</div>
<div id="t17" class="t" style="left:141.70px;top:546.40px;height:12px;line-height:12px;font-size:8.4px;color:#bbbbbb;transform:scaleX(0.7728);letter-spacing:0.25px;"><u>4</u>: Run</div>
<div id="t18" class="t" style="left:183.80px;top:546.40px;height:12px;line-height:12px;font-size:8.4px;color:#bbbbbb;transform:scaleX(0.7850);letter-spacing:0.25px;"><u>6</u>: TODO</div>
<div id="t19" class="t" style="left:951.00px;top:546.30px;height:12px;line-height:12px;font-size:8.4px;color:#bbbbbb;transform:scaleX(0.7744);letter-spacing:0.25px;">Event Log</div>
<div id="t20" class="t" style="left:18.70px;top:558.30px;height:12px;line-height:12px;font-size:8.4px;color:#bbbbbb;transform:scaleX(0.8068);letter-spacing:0.25px;">Compilation completed successfully in 4 s 210 ms (a minute ago)</div>
<div id="t21" class="t" style="left:849.60px;top:558.70px;height:12px;line-height:12px;font-size:8.4px;color:#bbbbbb;transform:scaleX(0.7698);letter-spacing:0.25px;">7:1</div>
<div id="t22" class="t" style="left:865.70px;top:558.70px;height:12px;line-height:12px;font-size:8.4px;color:#bbbbbb;transform:scaleX(0.8219);letter-spacing:0.25px;">LF</div>
<div id="t23" class="t" style="left:885.80px;top:558.70px;height:12px;line-height:12px;font-size:8.4px;color:#bbbbbb;transform:scaleX(0.8065);letter-spacing:0.25px;">UTF-8</div>
<div id="t24" class="t" style="left:918.40px;top:558.70px;height:12px;line-height:12px;font-size:8.4px;color:#bbbbbb;transform:scaleX(0.7838);letter-spacing:0.25px;">4 spaces</div>
<div id="t25" class="t" style="left:6.50px;top:51.60px;height:10px;line-height:10px;font-size:8.4px;color:#dedede;transform:translate(-50%,-50%) rotate(-90deg) scaleX(0.8445);transform-origin:center;-webkit-text-stroke:0.35px #dedede"><u>1</u>: Project</div>
<div id="t26" class="t" style="left:6.80px;top:446.20px;height:10px;line-height:10px;font-size:8.4px;color:#bbbbbb;transform:translate(-50%,-50%) rotate(-90deg) scaleX(0.7515);transform-origin:center;"><u>2</u>: Favorites</div>
<div id="t27" class="t" style="left:6.80px;top:508.60px;height:10px;line-height:10px;font-size:8.4px;color:#bbbbbb;transform:translate(-50%,-50%) rotate(-90deg) scaleX(0.8500);transform-origin:center;"><u>Z</u>: Structure</div>
<div id="t28" class="t" style="left:994.20px;top:62.00px;height:10px;line-height:10px;font-size:8.4px;color:#bbbbbb;transform:translate(-50%,-50%) rotate(90deg) scaleX(0.8561);transform-origin:center;">Database</div>
<div id="t29" class="t" style="left:994.20px;top:108.50px;height:10px;line-height:10px;font-size:8.4px;color:#bbbbbb;transform:translate(-50%,-50%) rotate(90deg) scaleX(0.7955);transform-origin:center;">Maven</div>
<div id="t30" class="t" style="left:994.20px;top:155.70px;height:10px;line-height:10px;font-size:8.4px;color:#bbbbbb;transform:translate(-50%,-50%) rotate(90deg) scaleX(0.8768);transform-origin:center;">Ant Build</div>
<div id="t31" class="t" style="left:527.60px;top:255.01px;height:12px;line-height:12px;font-size:9.2px;color:#bbbbbb;transform:scaleX(0.9023);letter-spacing:0.3px">Copy Reference</div>
<div id="t32" class="t" style="left:527.60px;top:266.23px;height:12px;line-height:12px;font-size:9.2px;color:#bbbbbb;transform:scaleX(0.8680);letter-spacing:0.3px">Paste</div>
<div id="t33" class="t" style="left:527.60px;top:277.45px;height:12px;line-height:12px;font-size:9.2px;color:#bbbbbb;transform:scaleX(0.9218);letter-spacing:0.3px">Paste from History...</div>
<div id="t34" class="t" style="left:527.60px;top:288.67px;height:12px;line-height:12px;font-size:9.2px;color:#bbbbbb;transform:scaleX(0.9409);letter-spacing:0.3px">Paste without Formatting</div>
<div id="t35" class="t" style="left:527.60px;top:299.89px;height:12px;line-height:12px;font-size:9.2px;color:#bbbbbb;transform:scaleX(0.9293);letter-spacing:0.3px">Column Selection Mode</div>
<div id="t36" class="t" style="left:527.60px;top:318.43px;height:12px;line-height:12px;font-size:9.2px;color:#bbbbbb;transform:scaleX(0.9077);letter-spacing:0.3px">Refactor</div>
<div id="t37" class="t" style="left:527.60px;top:336.97px;height:12px;line-height:12px;font-size:9.2px;color:#bbbbbb;transform:scaleX(0.9617);letter-spacing:0.3px">Folding</div>
<div id="t38" class="t" style="left:527.60px;top:348.19px;height:12px;line-height:12px;font-size:9.2px;color:#bbbbbb;transform:scaleX(0.9225);letter-spacing:0.3px">Analyze</div>
<div id="t39" class="t" style="left:527.60px;top:366.73px;height:12px;line-height:12px;font-size:9.2px;color:#bbbbbb;transform:scaleX(0.8508);letter-spacing:0.3px">Go To</div>
<div id="t40" class="t" style="left:527.60px;top:377.95px;height:12px;line-height:12px;font-size:9.2px;color:#bbbbbb;transform:scaleX(0.9012);letter-spacing:0.3px">Generate...</div>
<div id="t41" class="t" style="left:527.60px;top:396.49px;height:12px;line-height:12px;font-size:9.2px;color:#bbbbbb;transform:scaleX(0.9149);letter-spacing:0.3px">Recompile 'Main.java'</div>
<div id="t42" class="t" style="left:527.60px;top:407.71px;height:12px;line-height:12px;font-size:9.2px;color:#bbbbbb;transform:scaleX(0.9227);letter-spacing:0.3px">Run 'Main'</div>
<div id="t43" class="t" style="left:527.60px;top:418.93px;height:12px;line-height:12px;font-size:9.2px;color:#bbbbbb;transform:scaleX(0.9196);letter-spacing:0.3px">Debug 'Main'</div>
<div id="t44" class="t" style="left:527.60px;top:430.15px;height:12px;line-height:12px;font-size:9.2px;color:#bbbbbb;transform:scaleX(0.9199);letter-spacing:0.3px">Run 'Main' with Coverage</div>
<div id="t45" class="t" style="left:527.60px;top:448.69px;height:12px;line-height:12px;font-size:9.2px;color:#bbbbbb;transform:scaleX(0.8841);letter-spacing:0.3px">Save 'Main'</div>
<div id="t46" class="t" style="left:527.60px;top:467.23px;height:12px;line-height:12px;font-size:9.2px;color:#bbbbbb;transform:scaleX(0.9121);letter-spacing:0.3px">Reveal in Finder</div>
<div id="t47" class="t" style="left:527.60px;top:478.45px;height:12px;line-height:12px;font-size:9.2px;color:#bbbbbb;transform:scaleX(0.9609);letter-spacing:0.3px">Open in Terminal</div>
<div id="t48" class="t" style="left:527.60px;top:496.99px;height:12px;line-height:12px;font-size:9.2px;color:#bbbbbb;transform:scaleX(0.9190);letter-spacing:0.3px">Local History</div>
<div id="t49" class="t" style="left:527.60px;top:515.53px;height:12px;line-height:12px;font-size:9.2px;color:#bbbbbb;transform:scaleX(0.9529);letter-spacing:0.3px">Compare with Clipboard</div>
<div id="t50" class="t" style="left:527.60px;top:526.75px;height:12px;line-height:12px;font-size:9.2px;color:#bbbbbb;transform:scaleX(0.9164);letter-spacing:0.3px">File Encoding</div>
<div id="t51" class="t" style="left:527.60px;top:545.29px;height:12px;line-height:12px;font-size:9.2px;color:#bbbbbb;transform:scaleX(0.8932);letter-spacing:0.3px">Create Gist...</div>
<div id="t52" class="t" style="left:527.60px;top:556.51px;height:12px;line-height:12px;font-size:9.2px;color:#bbbbbb;transform:scaleX(0.8731);letter-spacing:0.3px">WebServices</div>
</body></html>
